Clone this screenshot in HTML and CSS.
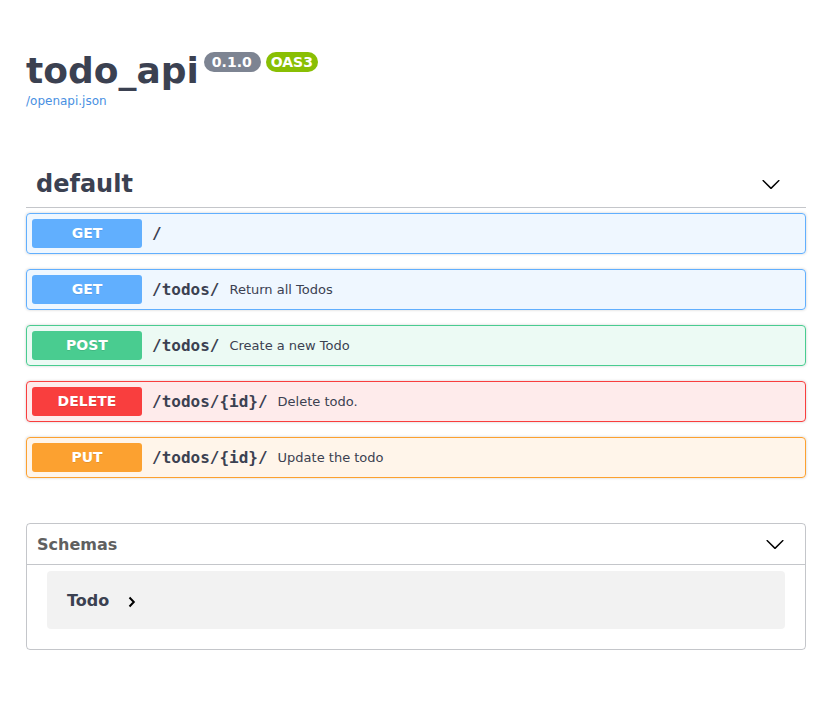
FILE: index.html
```html
<!DOCTYPE html>
<html>
<head>
<meta charset="utf-8">
<link rel="stylesheet" href="styles.css">
</head>
<body>
<div class="wrapper">
  <div class="info">
    <div class="title-row">
      <h2 class="title">todo_api</h2>
      <span class="badge version">0.1.0</span>
      <span class="badge oas">OAS3</span>
    </div>
    <a class="link" href="#">/openapi.json</a>
  </div>

  <div class="tag-section">
    <div class="tag">
      <span class="tag-name">default</span>
      <svg class="arrow" width="20" height="20" viewBox="0 0 20 20"><path d="M17.418 6.109c.272-.268.709-.268.979 0s.271.701 0 .969l-7.908 7.83c-.27.268-.707.268-.979 0l-7.908-7.83c-.27-.268-.27-.701 0-.969.271-.268.709-.268.979 0L10 13.25l7.418-7.141z" fill="#000"/></svg>
    </div>
    <div class="ops">
      <div class="op get"><span class="method">GET</span><span class="path">/</span></div>
      <div class="op get"><span class="method">GET</span><span class="path">/todos/</span><span class="desc">Return all Todos</span></div>
      <div class="op post"><span class="method">POST</span><span class="path">/todos/</span><span class="desc">Create a new Todo</span></div>
      <div class="op delete"><span class="method">DELETE</span><span class="path">/todos/{id}/</span><span class="desc">Delete todo.</span></div>
      <div class="op put"><span class="method">PUT</span><span class="path">/todos/{id}/</span><span class="desc">Update the todo</span></div>
    </div>
  </div>

  <section class="models">
    <div class="models-head">
      <span class="models-title">Schemas</span>
      <svg class="arrow" width="20" height="20" viewBox="0 0 20 20"><path d="M17.418 6.109c.272-.268.709-.268.979 0s.271.701 0 .969l-7.908 7.83c-.27.268-.707.268-.979 0l-7.908-7.83c-.27-.268-.27-.701 0-.969.271-.268.709-.268.979 0L10 13.25l7.418-7.141z" fill="#000"/></svg>
    </div>
    <div class="model-container">
      <span class="model-name">Todo</span>
      <svg class="chev" width="8" height="12" viewBox="0 0 8 12"><path d="M1.5 1.5 L5.8 6 L1.5 10.5" fill="none" stroke="#000" stroke-width="2"/></svg>
    </div>
  </section>
</div>
</body>
</html>
```
FILE: styles.css
```css
html, body {
  margin: 0;
  padding: 0;
  background: #fff;
}
body {
  font-family: "DejaVu Sans", sans-serif;
  color: #3b4151;
}
.wrapper {
  padding: 0 28px 0 26px;
}
.info {
  padding-top: 47px;
  margin-bottom: 50px;
}
.title-row {
  display: flex;
  align-items: flex-start;
}
.title {
  margin: 0;
  font-size: 36px;
  font-weight: bold;
  line-height: 48px;
  color: #3b4151;
}
.badge {
  display: inline-block;
  font-size: 14px;
  font-weight: bold;
  color: #fff;
  line-height: 20px;
  height: 20px;
  padding: 0 8px;
  border-radius: 57px;
  margin-top: 5px;
  font-family: "DejaVu Sans", sans-serif;
}
.version {
  background: #7d8492;
  margin-left: 5px;
  padding: 0 9px 0 8px;
}
.oas {
  background: #89bf04;
  margin-left: 5px;
  padding: 0 5px;
}
.link {
  display: block;
  font-size: 12px;
  color: #4990e2;
  text-decoration: none;
  line-height: 14px;
  margin-top: -1px;
}
.tag-section {
  margin-bottom: 45px;
}
.tag {
  display: flex;
  align-items: center;
  justify-content: space-between;
  height: 49px;
  padding: 0 25px 0 10px;
  border-bottom: 1px solid rgba(59, 65, 81, 0.3);
  margin-bottom: 5px;
}
.tag-name {
  font-size: 24px;
  font-weight: bold;
  color: #3b4151;
  padding-top: 3px;
}
.tag .arrow {
  margin-top: 3px;
}
.arrow {
  display: block;
}
.ops {
  display: flex;
  flex-direction: column;
  gap: 15px;
}
.op {
  display: flex;
  align-items: center;
  height: 39px;
  padding: 0 5px;
  border: 1px solid;
  border-radius: 4px;
  box-shadow: 0 0 3px rgba(0, 0, 0, 0.19);
}
.method {
  width: 110px;
  height: 29px;
  line-height: 29px;
  text-align: center;
  border-radius: 3px;
  color: #fff;
  font-size: 14px;
  font-weight: bold;
  text-shadow: 0 1px 0 rgba(0, 0, 0, 0.1);
  flex-shrink: 0;
}
.path {
  font-family: "DejaVu Sans Mono", monospace;
  font-weight: bold;
  font-size: 16px;
  color: #3b4151;
  margin-left: 10px;
}
.desc {
  font-size: 13px;
  color: #3b4151;
  margin-left: 10px;
}
.get { background: rgba(97, 175, 254, 0.1); border-color: #61affe; }
.get .method { background: #61affe; }
.post { background: rgba(73, 204, 144, 0.1); border-color: #49cc90; }
.post .method { background: #49cc90; }
.delete { background: rgba(249, 62, 62, 0.1); border-color: #f93e3e; }
.delete .method { background: #f93e3e; }
.put { background: rgba(252, 161, 48, 0.1); border-color: #fca130; }
.put .method { background: #fca130; }

.models {
  border: 1px solid rgba(59, 65, 81, 0.3);
  border-radius: 4px;
  padding-bottom: 20px;
}
.models-head {
  display: flex;
  align-items: center;
  justify-content: space-between;
  height: 40px;
  padding: 0 20px 0 10px;
  border-bottom: 1px solid rgba(59, 65, 81, 0.3);
  margin-bottom: 6px;
}
.models-title {
  font-size: 16px;
  font-weight: bold;
  color: #606060;
}
.model-container {
  display: flex;
  align-items: center;
  margin: 0 20px;
  height: 58px;
  padding-left: 20px;
  background: rgba(0, 0, 0, 0.05);
  border-radius: 4px;
}
.model-name {
  font-size: 16px;
  font-weight: bold;
  color: #3b4151;
}
.chev {
  margin-left: 19px;
  margin-top: 3px;
}
```
